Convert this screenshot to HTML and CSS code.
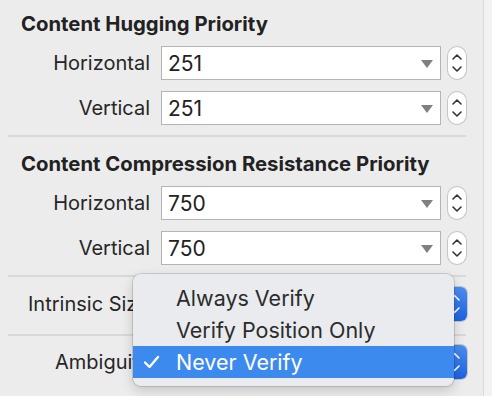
FILE: index.html
```html
<!DOCTYPE html>
<html>
<head>
<meta charset="utf-8">
<link rel="stylesheet" href="styles.css">
</head>
<body>
<div class="window">
  <div class="panel">
    <section class="group">
      <h2 class="heading">Content Hugging Priority</h2>
      <div class="row">
        <span class="label">Horizontal</span>
        <div class="combo"><span class="value">251</span><span class="tri"></span></div>
        <div class="stepper"><svg viewBox="0 0 18 32" width="18" height="32"><polyline points="5,12 9,8 13,12"/><polyline points="5,20 9,24 13,20"/></svg></div>
      </div>
      <div class="row">
        <span class="label">Vertical</span>
        <div class="combo"><span class="value">251</span><span class="tri"></span></div>
        <div class="stepper"><svg viewBox="0 0 18 32" width="18" height="32"><polyline points="5,12 9,8 13,12"/><polyline points="5,20 9,24 13,20"/></svg></div>
      </div>
    </section>
    <div class="sep"></div>
    <section class="group second">
      <h2 class="heading">Content Compression Resistance Priority</h2>
      <div class="row">
        <span class="label">Horizontal</span>
        <div class="combo"><span class="value">750</span><span class="tri"></span></div>
        <div class="stepper"><svg viewBox="0 0 18 32" width="18" height="32"><polyline points="5,12 9,8 13,12"/><polyline points="5,20 9,24 13,20"/></svg></div>
      </div>
      <div class="row">
        <span class="label">Vertical</span>
        <div class="combo"><span class="value">750</span><span class="tri"></span></div>
        <div class="stepper"><svg viewBox="0 0 18 32" width="18" height="32"><polyline points="5,12 9,8 13,12"/><polyline points="5,20 9,24 13,20"/></svg></div>
      </div>
    </section>
    <div class="sep"></div>
    <div class="prow first">
      <span class="plabel intrinsic">Intrinsic Size</span>
      <div class="popup"><span class="pcap"><svg viewBox="0 0 24 34" width="24" height="34"><polyline points="7,13 11.5,8.5 16,13"/><polyline points="7,21 11.5,25.5 16,21"/></svg></span></div>
    </div>
    <div class="sep sep-mid"></div>
    <div class="prow last">
      <span class="plabel ambig">Ambiguity</span>
      <div class="popup"><span class="pcap"><svg viewBox="0 0 24 34" width="24" height="34"><polyline points="7,13 11.5,8.5 16,13"/><polyline points="7,21 11.5,25.5 16,21"/></svg></span></div>
    </div>
  </div>
  <div class="strip"></div>

  <div class="menu">
    <div class="item">Always Verify</div>
    <div class="item">Verify Position Only</div>
    <div class="item selected"><svg class="check" viewBox="0 0 17 14" width="17" height="14"><polyline points="2,7.5 6.5,12 15,2"/></svg>Never Verify</div>
  </div>
</div>
</body>
</html>
```
FILE: styles.css
```css
html, body {
  margin: 0;
  padding: 0;
}
body {
  width: 492px;
  height: 396px;
  overflow: hidden;
  background: #ececec;
  font-family: Inter, "Liberation Sans", sans-serif;
  color: #262626;
}
.window {
  position: relative;
  display: flex;
  width: 492px;
  height: 396px;
}
.panel {
  width: 483px;
  box-sizing: border-box;
  padding-left: 8px;
}
.strip {
  width: 8px;
  border-left: 1px solid #dcdcdc;
  background: #f2f2f2;
}
.group {
  display: flex;
  flex-direction: column;
}
.heading {
  margin: 0;
  padding: 12px 0 0 13px;
  font-size: 20.3px;
  line-height: 23px;
  font-weight: 700;
  color: #222;
  height: 23px;
}
.second .heading {
  padding-top: 15px;
}
.row {
  display: flex;
  align-items: center;
  height: 34px;
  margin-top: 11px;
}
.label {
  width: 142px;
  text-align: right;
  font-size: 20px;
  margin-right: 11px;
}
.combo {
  width: 280px;
  height: 34px;
  box-sizing: border-box;
  background: #fff;
  border: 1px solid #b4b4b4;
  display: flex;
  align-items: center;
  justify-content: space-between;
  padding: 0 7px 0 6px;
}
.value {
  font-size: 21px;
  color: #222;
}
.tri {
  width: 0;
  height: 0;
  border-left: 6px solid transparent;
  border-right: 6px solid transparent;
  border-top: 8px solid #808080;
  margin-top: 2px;
}
.stepper {
  margin-left: 7px;
  width: 18px;
  height: 32px;
  box-sizing: border-box;
  border-radius: 9px;
  background: #fff;
  box-shadow: 0 0 0 1px #c6c6c6, 0 1px 1px rgba(0,0,0,0.1);
}
.stepper svg {
  display: block;
}
.stepper polyline, .pcap polyline {
  fill: none;
  stroke: #333;
  stroke-width: 1.6;
  stroke-linecap: round;
  stroke-linejoin: round;
}
.sep {
  height: 2px;
  width: 458px;
  background: #d8d8d8;
  margin-top: 10px;
}
.sep-mid {
  margin-top: 13px;
}
.prow {
  display: flex;
  align-items: center;
  height: 34px;
  margin-top: 10px;
}
.prow.last {
  margin-top: 9px;
}
.plabel {
  font-size: 20px;
}
.intrinsic {
  margin-left: 20px;
  width: 133px;
}
.ambig {
  margin-left: 47px;
  width: 106px;
}
.popup {
  width: 306px;
  height: 34px;
  box-sizing: border-box;
  background: #fff;
  border-radius: 6px;
  box-shadow: 0 0 0 1px #c6c6c6;
  display: flex;
  justify-content: flex-end;
}
.pcap {
  width: 24px;
  height: 34px;
  border-radius: 0 6px 6px 0;
  background: linear-gradient(#4a8ef0, #1d62e0);
}
.pcap svg {
  display: block;
}
.pcap polyline {
  stroke: #fff;
}
.menu {
  position: absolute;
  left: 133px;
  top: 274px;
  width: 321px;
  height: 112px;
  box-sizing: border-box;
  padding: 8px 0;
  background: #e9ebee;
  border-radius: 8px;
  box-shadow: 0 0 0 1px rgba(0,0,0,0.13), 0 4px 12px rgba(0,0,0,0.18);
}
.item {
  position: relative;
  height: 32px;
  line-height: 32px;
  padding-left: 43px;
  font-size: 21.5px;
  color: #2c2c2c;
}
.item.selected {
  background: #3d8aef;
  color: #fff;
}
.check {
  position: absolute;
  left: 10px;
  top: 9px;
}
.check polyline {
  fill: none;
  stroke: #fff;
  stroke-width: 2.4;
  stroke-linecap: round;
  stroke-linejoin: round;
}
```
